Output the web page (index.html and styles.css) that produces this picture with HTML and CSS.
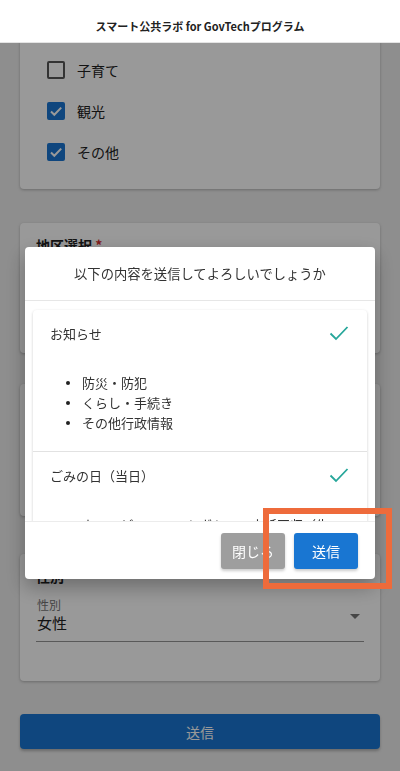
FILE: index.html
```html
<!DOCTYPE html>
<html lang="ja">
<head>
  <meta charset="UTF-8">
  <meta name="viewport" content="width=device-width, initial-scale=1.0">
  <title>スマート公共ラボ for GovTechプログラム</title>
  <link rel="stylesheet" href="styles.css">
</head>
<body>
  <header class="app-bar">スマート公共ラボ for GovTechプログラム</header>

  <main class="form">
    <section class="card card-topics">
      <label class="check-row"><span class="box"></span>子育て</label>
      <label class="check-row"><span class="box checked"><svg viewBox="0 0 18 18"><path d="M4 9.5l3.3 3.3L14.2 5.6"/></svg></span>観光</label>
      <label class="check-row"><span class="box checked"><svg viewBox="0 0 18 18"><path d="M4 9.5l3.3 3.3L14.2 5.6"/></svg></span>その他</label>
    </section>

    <section class="card card-area">
      <h2 class="card-title">地区選択 <span class="req">*</span></h2>
    </section>

    <section class="card card-age">
      <h2 class="card-title">年代 <span class="req">*</span></h2>
    </section>

    <section class="card card-gender">
      <h2 class="card-title">性別</h2>
      <div class="select-field">
        <div class="select-text">
          <span class="select-label">性別</span>
          <span class="select-value">女性</span>
        </div>
        <span class="caret"></span>
      </div>
    </section>

    <button class="submit">送信</button>
  </main>

  <div class="overlay">
    <div class="dialog">
      <div class="dialog-title">以下の内容を送信してよろしいでしょうか</div>
      <div class="dialog-body">
        <div class="summary">
          <div class="summary-item">
            <div class="item-head">
              <span>お知らせ</span>
              <svg class="tick" viewBox="0 0 20 16"><path d="M1.5 8.5l5.5 5.5L18.5 2"/></svg>
            </div>
            <ul class="item-list">
              <li>防災・防犯</li>
              <li>くらし・手続き</li>
              <li>その他行政情報</li>
            </ul>
          </div>
          <div class="summary-item">
            <div class="item-head">
              <span>ごみの日（当日）</span>
              <svg class="tick" viewBox="0 0 20 16"><path d="M1.5 8.5l5.5 5.5L18.5 2"/></svg>
            </div>
            <ul class="item-list">
              <li>カン・ビン・ペットボトル・古紙回収（生</li>
            </ul>
          </div>
        </div>
      </div>
      <div class="dialog-actions">
        <button class="btn btn-close">閉じる</button>
        <button class="btn btn-send">送信</button>
      </div>
    </div>
  </div>

  <div class="highlight"></div>
</body>
</html>
```

FILE: styles.css
```css
:root {
  --page-bg: #ededed;
  --card-bg: #ffffff;
  --primary: #1976d2;
  --text: #212121;
  --text-muted: #757575;
  --teal: #26a69a;
  --accent: #ee6b3b;
}
* { box-sizing: border-box; margin: 0; padding: 0; }
body {
  background: var(--page-bg);
  font-family: "Noto Sans CJK JP", "Noto Sans", sans-serif;
  color: var(--text);
  height: 771px;
  overflow: hidden;
}

/* Top bar */
.app-bar {
  position: relative;
  z-index: 3;
  height: 43px;
  background: #fff;
  border-bottom: 1px solid #e4e4e4;
  display: flex; justify-content: center; align-items: center;
  padding-top: 10px;
  font-size: 11px;
  font-weight: 700;
  color: #222;
}

/* Form behind the dialog */
.form {
  padding: 0 20px;
  display: flex; flex-direction: column;
}
.card {
  background: var(--card-bg);
  border-radius: 4px;
  box-shadow: 0 1px 3px rgba(0,0,0,0.25);
  padding: 12px 16px;
}
.card-topics { margin-top: -20px; padding: 26px 27px 17px; }
.card-area { margin-top: 34px; height: 130px; }
.card-age { margin-top: 31px; height: 132px; }
.card-gender { margin-top: 38px; height: 127px; }
.card-title {
  font-size: 14px; font-weight: 700; line-height: 20px;
}
.req { color: #d32f2f; }

.check-row {
  display: flex; align-items: center; gap: 12px;
  height: 41px;
  font-size: 14px;
}
.box {
  width: 18px; height: 18px;
  border: 2px solid #555;
  border-radius: 2px;
  display: flex;
}
.box.checked { background: var(--primary); border-color: var(--primary); }
.box svg { width: 18px; height: 18px; margin: -2px; }
.box path { fill: none; stroke: #fff; stroke-width: 2; }

.select-field {
  margin-top: 11px;
  padding: 0 4px 8px 1px;
  border-bottom: 1px solid rgba(0,0,0,0.42);
  display: flex; align-items: center; justify-content: space-between;
}
.select-text { display: flex; flex-direction: column; }
.select-label { font-size: 12px; line-height: 16px; color: var(--text-muted); }
.select-value { font-size: 15px; line-height: 20px; }
.caret {
  width: 0; height: 0;
  border-left: 5px solid transparent;
  border-right: 5px solid transparent;
  border-top: 5px solid #757575;
  margin-top: 2px;
}

.submit {
  margin-top: 33px;
  height: 35px;
  border: none; border-radius: 4px;
  background: var(--primary);
  color: #fff;
  font: inherit; font-size: 14px;
  box-shadow: 0 2px 3px rgba(0,0,0,0.25);
}

/* Dim layer + dialog */
.overlay {
  position: fixed; top: 0; left: 0;
  width: 100%; height: 100%;
  z-index: 2;
  background: rgba(0,0,0,0.4);
  display: flex; justify-content: center; align-items: flex-start;
  padding-top: 247px;
}
.dialog {
  width: 350px;
  background: #fff;
  border-radius: 4px;
  box-shadow: 0 8px 20px rgba(0,0,0,0.3);
  overflow: hidden;
}
.dialog-title {
  height: 54px;
  border-bottom: 1px solid #e6e6e6;
  display: flex; justify-content: center; align-items: center;
  font-size: 13.3px;
  color: #333;
}
.dialog-body {
  height: 220px;
  overflow: hidden;
  padding: 9px 8px 0;
}
.summary {
  border-radius: 4px;
  box-shadow: 0 1px 3px rgba(0,0,0,0.2);
}
.summary-item { border-bottom: 1px solid #e2e2e2; }
.item-head {
  height: 46px;
  padding: 0 18px 0 17px;
  display: flex; align-items: center; justify-content: space-between;
  font-size: 13px;
  color: #333;
}
.tick { width: 20px; height: 16px; }
.tick path { fill: none; stroke: var(--teal); stroke-width: 1.8; }
.item-list {
  list-style: none;
  padding: 17px 0 18px 33px;
  font-size: 13px;
  line-height: 20px;
  color: #333;
}
.item-list li { display: flex; align-items: center; gap: 12px; white-space: nowrap; }
.item-list li::before {
  content: "";
  width: 4px; height: 4px;
  border-radius: 50%;
  background: #222;
}
.dialog-actions {
  height: 58px;
  border-top: 1px solid #ececec;
  padding: 0 17px;
  display: flex; justify-content: flex-end; align-items: center; gap: 9px;
}
.btn {
  width: 64px; height: 36px;
  border: none; border-radius: 3px;
  color: #fff;
  font: inherit; font-size: 14px;
  box-shadow: 0 2px 3px rgba(0,0,0,0.2);
}
.btn-close { background: #9e9e9e; }
.btn-send { background: var(--primary); }

/* Annotation frame over the send button */
.highlight {
  position: fixed;
  left: 263px; top: 508px;
  width: 129px; height: 81px;
  border: 6px solid var(--accent);
  z-index: 5;
}
```
